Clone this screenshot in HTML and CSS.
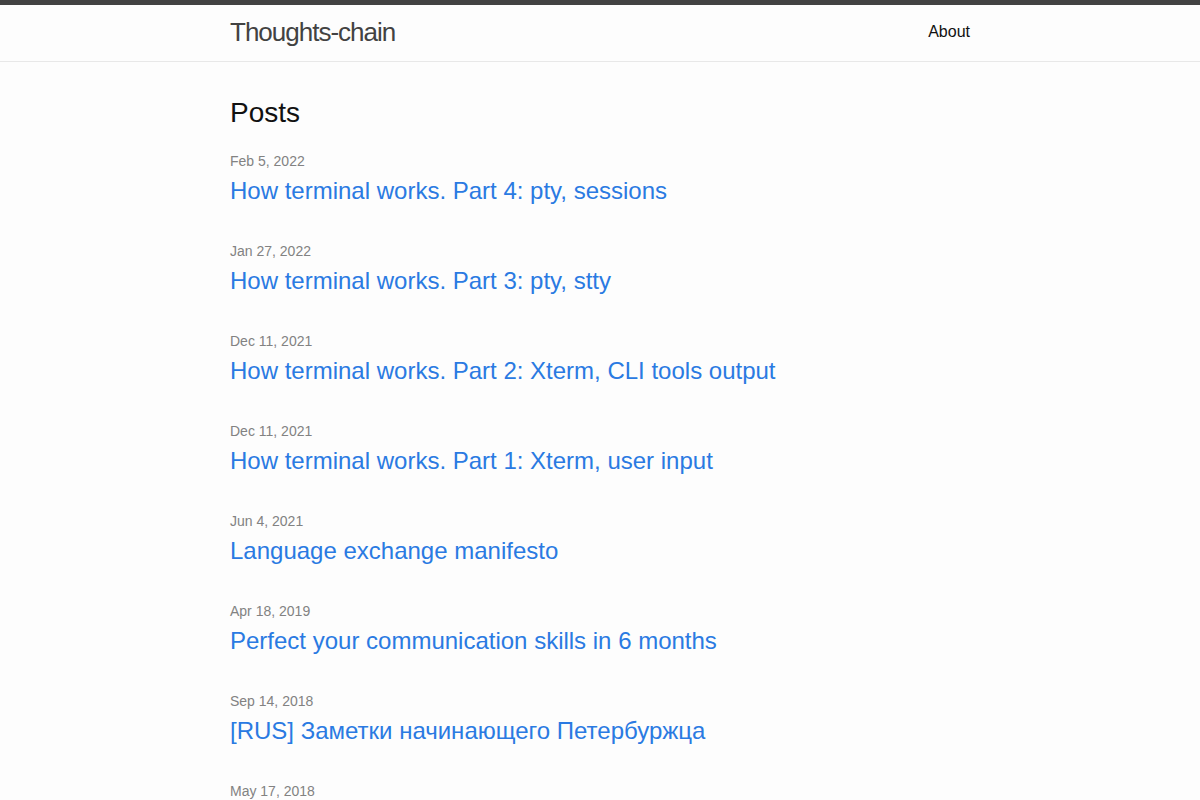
FILE: index.html
```
<!DOCTYPE html>
<html lang="en">
    <head>
        <meta charset="utf-8">
        <title>Thoughts-chain</title>
        <link rel="stylesheet" href="styles.css">
    </head>
    <body>
        <header class="site-header">
            <div class="wrapper header-row">
                <a class="site-title" href="#">Thoughts-chain</a>
                <nav class="site-nav">
                    <a class="page-link" href="#">About</a>
                </nav>
            </div>
        </header>

        <main class="page-content">
            <div class="wrapper">
                <h2 class="post-list-heading">Posts</h2>
                <ul class="post-list">
                    <li>
                        <span class="post-meta">Feb 5, 2022</span>
                        <h3><a class="post-link" href="#">How terminal works. Part 4: pty, sessions</a></h3>
                    </li>
                    <li>
                        <span class="post-meta">Jan 27, 2022</span>
                        <h3><a class="post-link" href="#">How terminal works. Part 3: pty, stty</a></h3>
                    </li>
                    <li>
                        <span class="post-meta">Dec 11, 2021</span>
                        <h3><a class="post-link" href="#">How terminal works. Part 2: Xterm, CLI tools output</a></h3>
                    </li>
                    <li>
                        <span class="post-meta">Dec 11, 2021</span>
                        <h3><a class="post-link" href="#">How terminal works. Part 1: Xterm, user input</a></h3>
                    </li>
                    <li>
                        <span class="post-meta">Jun 4, 2021</span>
                        <h3><a class="post-link" href="#">Language exchange manifesto</a></h3>
                    </li>
                    <li>
                        <span class="post-meta">Apr 18, 2019</span>
                        <h3><a class="post-link" href="#">Perfect your communication skills in 6 months</a></h3>
                    </li>
                    <li>
                        <span class="post-meta">Sep 14, 2018</span>
                        <h3><a class="post-link" href="#">[RUS] Заметки начинающего Петербуржца</a></h3>
                    </li>
                    <li>
                        <span class="post-meta">May 17, 2018</span>
                        <h3><a class="post-link" href="#">Older posts</a></h3>
                    </li>
                </ul>
            </div>
        </main>
    </body>
</html>
```

FILE: styles.css
```
body {
    margin: 0;
    background-color: #fdfdfd;
    color: #111;
    font: 400 16px/1.5 "Liberation Sans", Arial, sans-serif;
}
a {
    text-decoration: none;
}
.wrapper {
    max-width: 740px;
    margin: 0 auto;
    padding: 0 30px;
}
.site-header {
    border-top: 5px solid #424242;
    border-bottom: 1px solid #e8e8e8;
    min-height: 56px;
}
.header-row {
    display: flex;
    justify-content: space-between;
    align-items: flex-start;
}
.site-title {
    font-size: 26px;
    line-height: 54px;
    letter-spacing: -1px;
    color: #424242;
}
.site-nav {
    line-height: 54px;
}
.page-link {
    color: #111;
    line-height: 1.5;
}
.page-content {
    padding: 30px 0;
}
.post-list-heading {
    font-size: 28px;
    font-weight: 400;
    line-height: 1.5;
    margin: 0 0 15px;
}
.post-list {
    list-style: none;
    margin: 0;
    padding: 0;
}
.post-list > li {
    margin-bottom: 30px;
}
.post-meta {
    font-size: 14px;
    color: #828282;
}
.post-list h3 {
    margin: 0;
    font-weight: 400;
}
.post-link {
    display: block;
    font-size: 24px;
    color: #2a7ae2;
}
```
